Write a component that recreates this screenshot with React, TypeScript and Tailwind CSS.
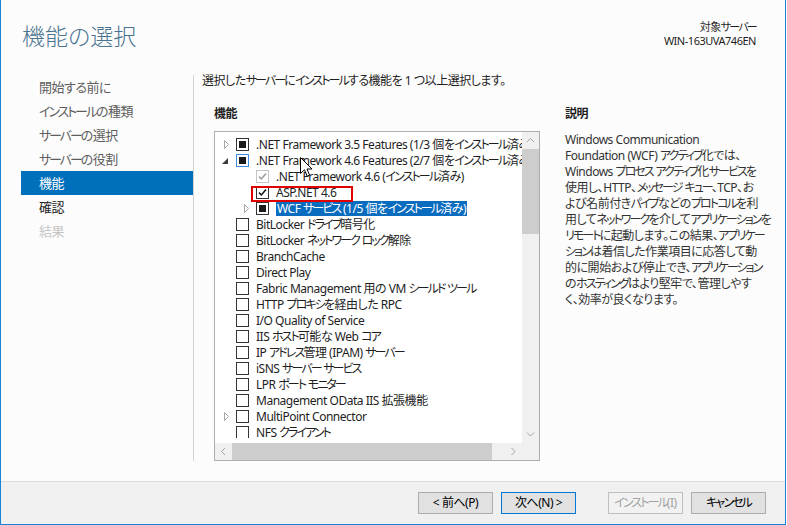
import React from "react";

type CB = "empty" | "ind" | "indFocus" | "checked" | "checkedDisabled";
type Exp = "none" | "closed" | "open";

const FONT = "font-['Segoe_UI','Noto_Sans','Noto_Sans_CJK_JP',sans-serif] [font-feature-settings:'palt'] tracking-[-0.03em]";

// Narrow kana runs a little, like the Windows UI font does
function J({ t }: { t: string }) {
  const parts = t.split(/([\u30a0-\u30ff]+|[\u3040-\u309f]+)/);
  return (
    <>
      {parts.map((p, i) =>
        !p ? null : /[\u30a0-\u30ff]/.test(p) ? (
          <span key={i} className="tracking-[-0.16em]">
            {p}
          </span>
        ) : /[\u3040-\u309f]/.test(p) ? (
          <span key={i} className="tracking-[-0.04em]">
            {p}
          </span>
        ) : (
          <span key={i}>{p}</span>
        )
      )}
    </>
  );
}

function Check({ s }: { s: CB }) {
  const border =
    s === "indFocus"
      ? "border-[#3c8de0]"
      : s === "checkedDisabled"
      ? "border-[#c4c4c4]"
      : "border-[#333333]";
  return (
    <span className={`flex h-[13px] w-[13px] shrink-0 items-center justify-center border bg-white ${border}`}>
      {(s === "ind" || s === "indFocus") && <span className="h-[7px] w-[7px] bg-[#1a1a1a]" />}
      {(s === "checked" || s === "checkedDisabled") && (
        <svg width="9" height="9" viewBox="0 0 9 9">
          <path
            d="M1 4.6 L3.4 7 L8 1.6"
            fill="none"
            stroke={s === "checked" ? "#111111" : "#9c9c9c"}
            strokeWidth="1.5"
          />
        </svg>
      )}
    </span>
  );
}

function Expander({ e }: { e: Exp }) {
  return (
    <span className="flex h-[16px] w-[15px] shrink-0 items-center">
      {e === "closed" && (
        <svg width="8" height="9" viewBox="0 0 8 9" className="ml-[3px]">
          <polygon points="0.5,0.5 4.5,4.5 0.5,8.5" fill="none" stroke="#a6a6a6" strokeWidth="1" />
        </svg>
      )}
      {e === "open" && (
        <svg width="7" height="7" viewBox="0 0 7 7" className="ml-[1px] mt-[2px]">
          <polygon points="6,0 6,6 0,6" fill="#3c3c3c" />
        </svg>
      )}
    </span>
  );
}

type RowData = { level: 0 | 1; exp: Exp; cb: CB; text: string; sel?: boolean };

const rows: RowData[] = [
  { level: 0, exp: "closed", cb: "ind", text: ".NET Framework 3.5 Features (1/3 個をインストール済み)" },
  { level: 0, exp: "open", cb: "indFocus", text: ".NET Framework 4.6 Features (2/7 個をインストール済み)" },
  { level: 1, exp: "none", cb: "checkedDisabled", text: ".NET Framework 4.6 (インストール済み)" },
  { level: 1, exp: "none", cb: "checked", text: "ASP.NET 4.6" },
  { level: 1, exp: "closed", cb: "ind", text: "WCF サービス (1/5 個をインストール済み)", sel: true },
  { level: 0, exp: "none", cb: "empty", text: "BitLocker ドライブ暗号化" },
  { level: 0, exp: "none", cb: "empty", text: "BitLocker ネットワーク ロック解除" },
  { level: 0, exp: "none", cb: "empty", text: "BranchCache" },
  { level: 0, exp: "none", cb: "empty", text: "Direct Play" },
  { level: 0, exp: "none", cb: "empty", text: "Fabric Management 用の VM シールド ツール" },
  { level: 0, exp: "none", cb: "empty", text: "HTTP プロキシを経由した RPC" },
  { level: 0, exp: "none", cb: "empty", text: "I/O Quality of Service" },
  { level: 0, exp: "none", cb: "empty", text: "IIS ホスト可能な Web コア" },
  { level: 0, exp: "none", cb: "empty", text: "IP アドレス管理 (IPAM) サーバー" },
  { level: 0, exp: "none", cb: "empty", text: "iSNS サーバー サービス" },
  { level: 0, exp: "none", cb: "empty", text: "LPR ポート モニター" },
  { level: 0, exp: "none", cb: "empty", text: "Management OData IIS 拡張機能" },
  { level: 0, exp: "closed", cb: "empty", text: "MultiPoint Connector" },
  { level: 0, exp: "none", cb: "empty", text: "NFS クライアント" },
  { level: 0, exp: "none", cb: "empty", text: "Network Load Balancing" },
];

function Row({ r }: { r: RowData }) {
  return (
    <div className={`flex h-[16px] items-center whitespace-nowrap ${r.level === 0 ? "pl-[6px]" : "pl-[26px]"}`}>
      <Expander e={r.exp} />
      <Check s={r.cb} />
      <span
        className={`ml-[7px] text-[12px] leading-[15px] ${
          r.sel ? "bg-[#0a6cbf] px-[1px] text-white" : "text-[#1e1e1e]"
        }`}
      >
        <J t={r.text} />
      </span>
    </div>
  );
}

const nav: { t: string; c: string }[] = [
  { t: "開始する前に", c: "text-[#5e5e5e]" },
  { t: "インストールの種類", c: "text-[#5e5e5e]" },
  { t: "サーバーの選択", c: "text-[#5e5e5e]" },
  { t: "サーバーの役割", c: "text-[#5e5e5e]" },
  { t: "機能", c: "bg-[#0070bc] text-white" },
  { t: "確認", c: "text-[#222222]" },
  { t: "結果", c: "text-[#c6c6c6]" },
];

const desc = [
  "Windows Communication",
  "Foundation (WCF) アクティブ化では、",
  "Windows プロセス アクティブ化サービスを",
  "使用し、HTTP、メッセージ キュー、TCP、お",
  "よび名前付きパイプなどのプロトコルを利",
  "用してネットワークを介してアプリケーションを",
  "リモートに起動します。この結果、アプリケー",
  "ションは着信した作業項目に応答して動",
  "的に開始および停止でき、アプリケーション",
  "のホスティングはより堅牢で、管理しやす",
  "く、効率が良くなります。",
];

function Chevron({ dir }: { dir: "up" | "down" | "left" | "right" }) {
  const d =
    dir === "up"
      ? "M1 5 L4.5 1.5 L8 5"
      : dir === "down"
      ? "M1 1.5 L4.5 5 L8 1.5"
      : dir === "left"
      ? "M5 1 L1.5 4.5 L5 8"
      : "M1.5 1 L5 4.5 L1.5 8";
  const horiz = dir === "left" || dir === "right";
  return (
    <svg width={horiz ? 7 : 9} height={horiz ? 9 : 7} viewBox={horiz ? "0 0 7 9" : "0 0 9 7"}>
      <path d={d} fill="none" stroke="#a3a3a3" strokeWidth="1" />
    </svg>
  );
}

function Button({ label, kind }: { label: string; kind?: "default" | "disabled" }) {
  const cls =
    kind === "default"
      ? "border-[#0078d7] bg-[#e1e1e1] text-[#000000]"
      : kind === "disabled"
      ? "border-[#bfbfbf] bg-[#f2f2f2] text-[#a2a2a2]"
      : "border-[#adadad] bg-[#e1e1e1] text-[#000000]";
  return (
    <div
      className={`flex h-[22px] w-[75px] items-center justify-center whitespace-nowrap border text-[12px] ${cls}`}
    >
      <J t={label} />
    </div>
  );
}

export default function App() {
  return (
    <div className={`relative flex h-[525px] w-[786px] flex-col border-x border-b border-[#1883d7] bg-[#fcfcfc] ${FONT}`}>
      {/* header */}
      <div className="flex h-[72px] shrink-0 justify-between pl-[21px] pr-[29px]">
        <div className="pt-[21px] text-[23px] font-light leading-[30px] tracking-normal text-[#4a7390]">機能の選択</div>
        <div className="pt-[20px] text-right text-[11px] leading-[14px] text-[#1e1e1e]">
          <div>
            <J t="対象サーバー" />
          </div>
          <div>WIN-163UVA746EN</div>
        </div>
      </div>

      {/* body */}
      <div className="flex h-[389px] shrink-0">
        <div className="mt-[3px] w-[193px] shrink-0 border-r border-[#d4d4d4]">
          <div className="ml-[20px] flex flex-col">
            {nav.map((n) => (
              <div key={n.t} className={`flex h-[24px] items-center whitespace-nowrap pl-[18px] pt-[1px] text-[13px] ${n.c}`}>
                <J t={n.t} />
              </div>
            ))}
          </div>
        </div>

        <div className="flex flex-col pl-[8px] pt-[1px]">
          <div className="h-[16px] whitespace-nowrap text-[12px] leading-[16px] text-[#1e1e1e]">
            <J t="選択したサーバーにインストールする機能を 1 つ以上選択します。" />
          </div>
          <div className="ml-[12px] mt-[17px] flex gap-[25px]">
            {/* features */}
            <div className="flex flex-col">
              <div className="h-[16px] text-[12px] font-bold leading-[16px] text-[#1e1e1e]">機能</div>
              <div className="mt-[9px] flex h-[330px] w-[326px] flex-col border border-[#abadb3] bg-white">
                <div className="flex min-h-0 flex-1">
                  <div className="w-[307px] overflow-hidden pt-[4px]">
                    <div className="h-[302px] overflow-hidden">
                      {rows.map((r) => (
                        <Row key={r.text} r={r} />
                      ))}
                    </div>
                  </div>
                  <div className="flex w-[17px] flex-col bg-[#f0f0f0]">
                    <div className="flex h-[17px] items-center justify-center">
                      <Chevron dir="up" />
                    </div>
                    <div className="h-[85px] bg-[#cdcdcd]" />
                    <div className="flex-1" />
                    <div className="flex h-[17px] items-center justify-center">
                      <Chevron dir="down" />
                    </div>
                  </div>
                </div>
                <div className="flex h-[17px] shrink-0 bg-[#f0f0f0]">
                  <div className="flex w-[17px] items-center justify-center">
                    <Chevron dir="left" />
                  </div>
                  <div className="w-[260px] bg-[#cdcdcd]" />
                  <div className="flex-1" />
                  <div className="flex w-[17px] items-center justify-center">
                    <Chevron dir="right" />
                  </div>
                  <div className="w-[17px]" />
                </div>
              </div>
            </div>

            {/* description */}
            <div className="flex flex-col">
              <div className="h-[16px] text-[12px] font-bold leading-[16px] text-[#1e1e1e]">説明</div>
              <div className="mt-[10px] text-[12px] leading-[16px] text-[#333333]">
                {desc.map((l) => (
                  <div key={l} className="whitespace-nowrap">
                    <J t={l} />
                  </div>
                ))}
              </div>
            </div>
          </div>
        </div>
      </div>

      <div className="flex-1" />

      {/* footer */}
      <div className="flex h-[43px] shrink-0 justify-end border-t border-[#d9d9d9] bg-[#f0f0f0] pr-[19px] pt-[10px]">
        <Button label="< 前へ(P)" />
        <div className="ml-[8px]">
          <Button label="次へ(N) >" kind="default" />
        </div>
        <div className="ml-[32px]">
          <Button label="インストール(I)" kind="disabled" />
        </div>
        <div className="ml-[8px]">
          <Button label="キャンセル" />
        </div>
      </div>

      {/* annotation: red highlight box */}
      <div className="pointer-events-none absolute left-[250px] top-[186px] h-[16px] w-[102px] border-2 border-[#e00000]" />

      {/* mouse cursor */}
      <svg className="pointer-events-none absolute left-[299px] top-[157px]" width="13" height="21" viewBox="0 0 13 21">
        <path
          d="M0.5 0.5 L0.5 16.5 L4.5 12.8 L7.2 19.2 L9.6 18.2 L7 12 L12 12 Z"
          fill="#ffffff"
          stroke="#000000"
          strokeWidth="1"
          strokeLinejoin="round"
        />
      </svg>
    </div>
  );
}
